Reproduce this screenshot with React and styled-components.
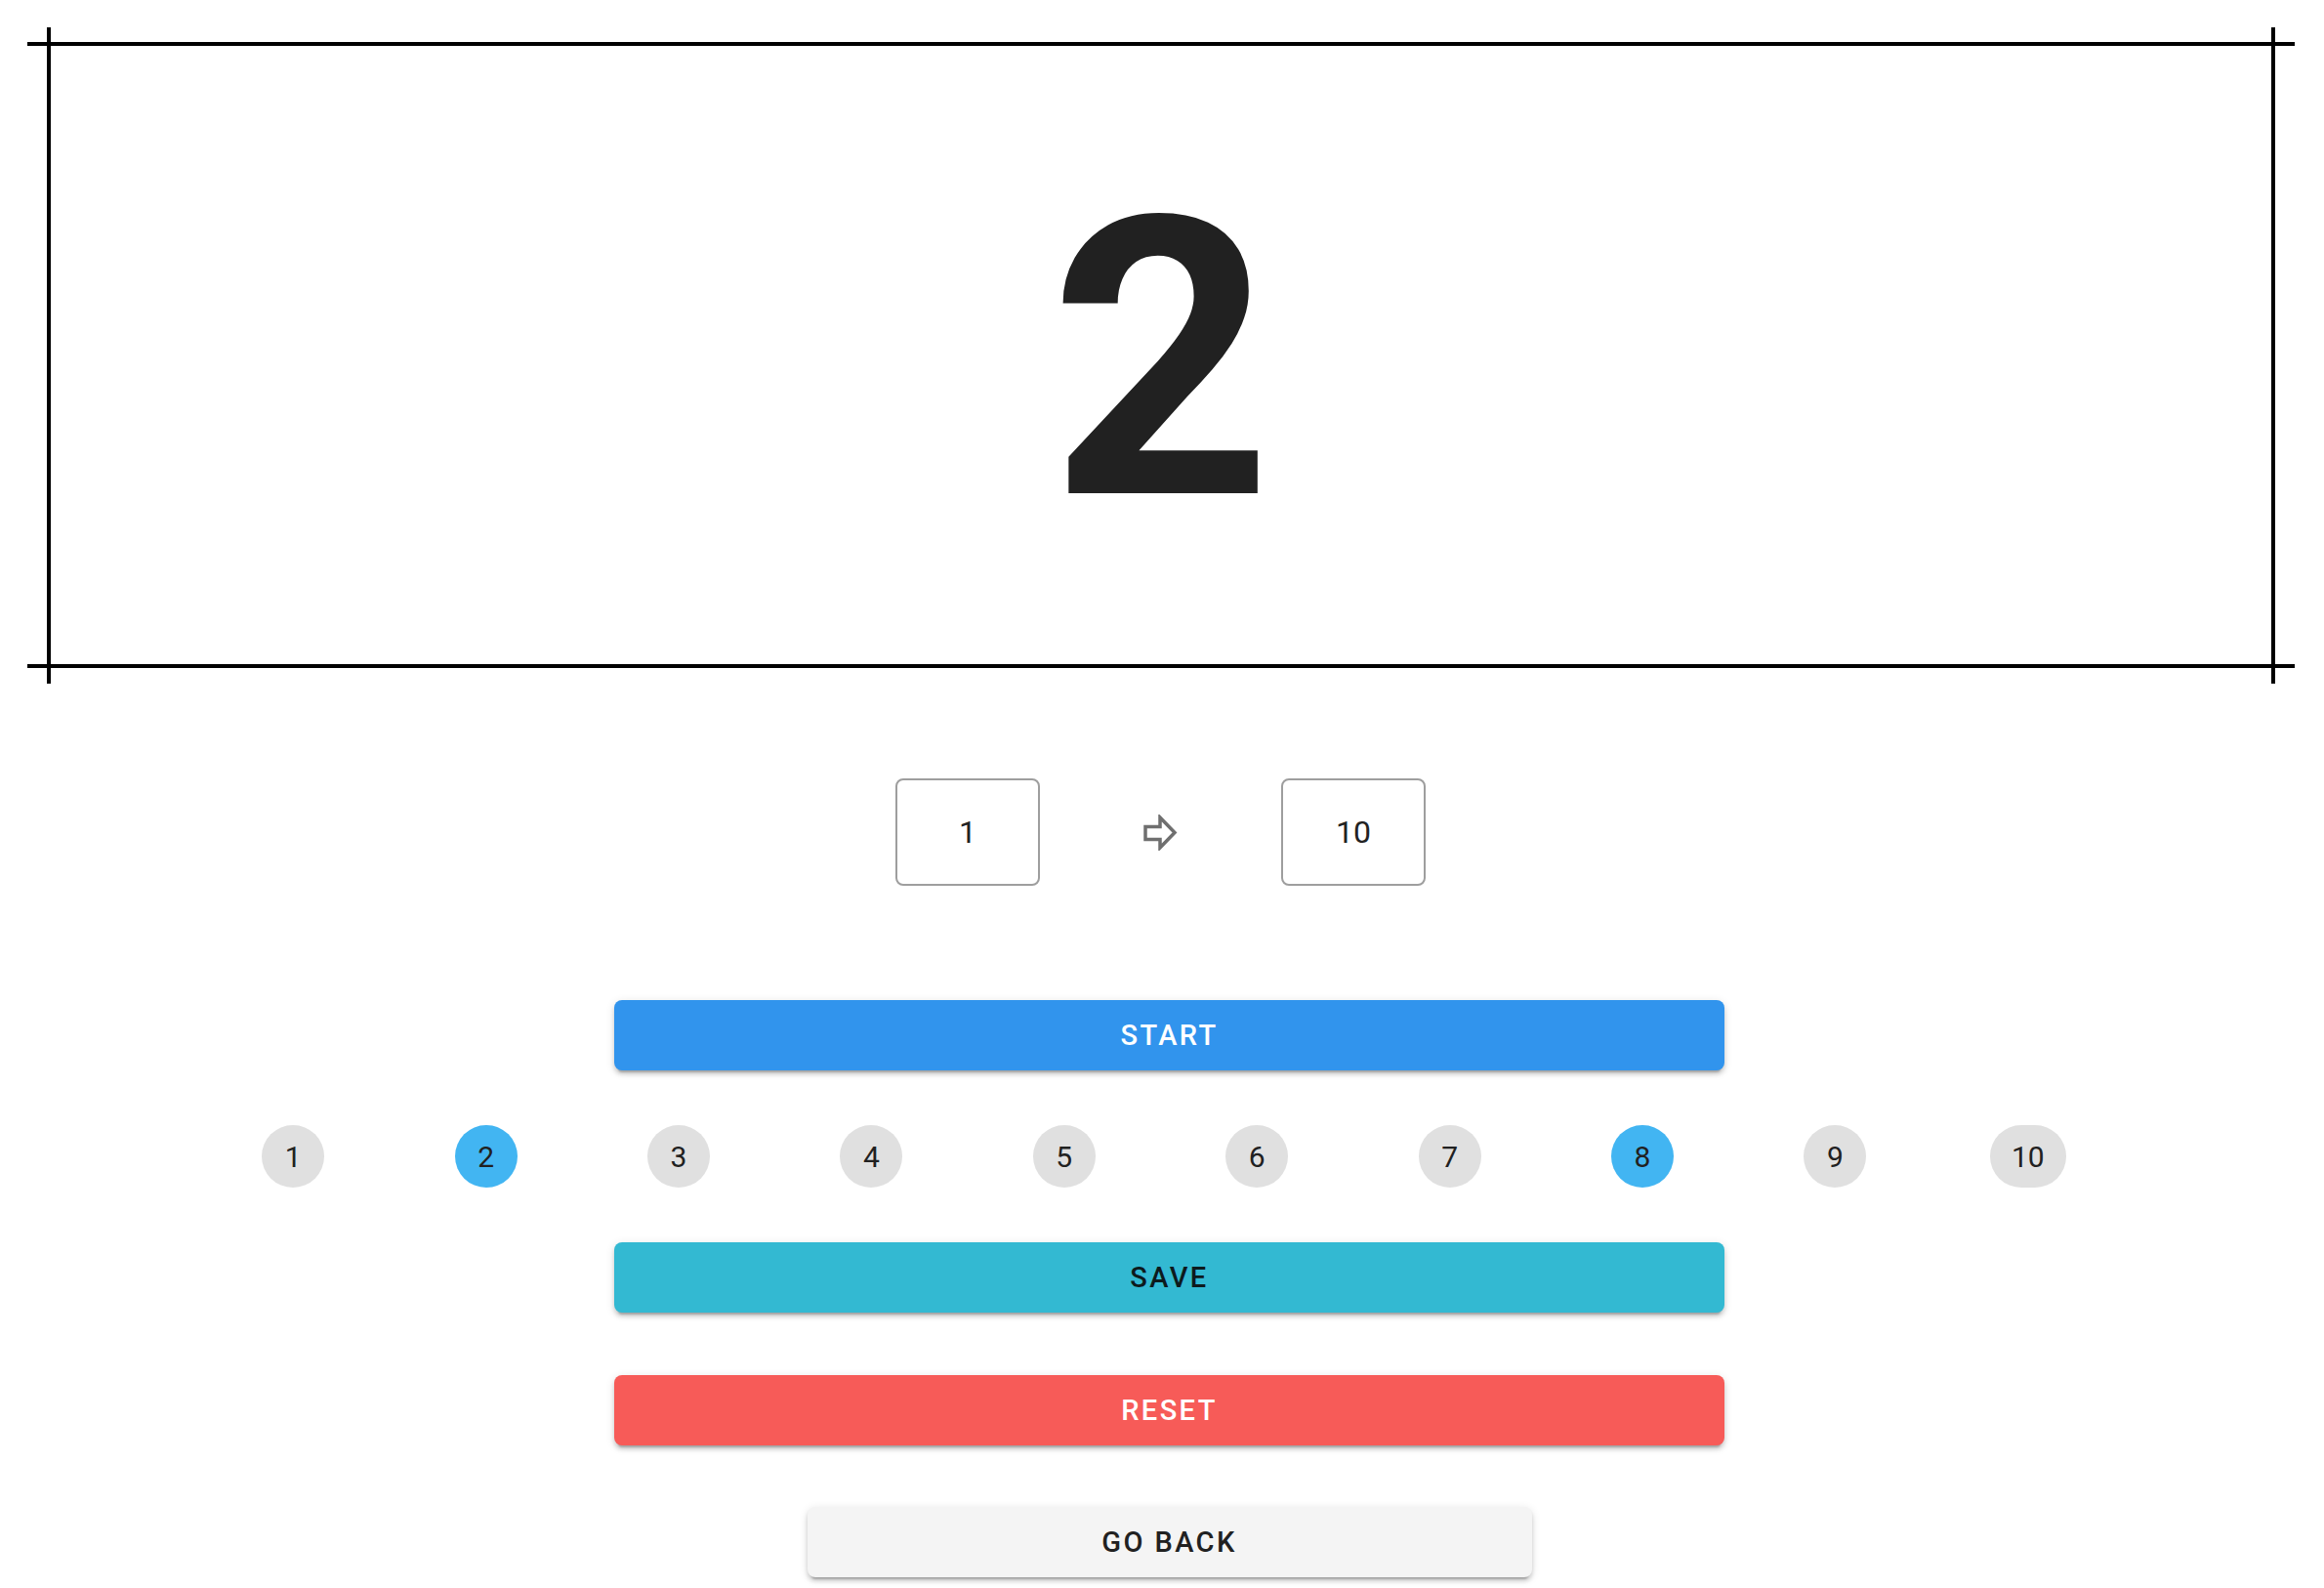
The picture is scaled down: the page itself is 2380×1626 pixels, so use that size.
import React from 'react';
import styled, { createGlobalStyle } from 'styled-components';

const GlobalStyle = createGlobalStyle`
  body {
    margin: 0;
    background: #ffffff;
    font-family: Roboto, "Liberation Sans", Arial, sans-serif;
    color: #212121;
  }
`;

const Page = styled.div`
  display: flex;
  flex-direction: column;
  padding-bottom: 10px;
`;

// crop-mark frame: vertical rails overshoot the horizontal rules and vice versa
const Frame = styled.div`
  margin: 28px 30px 0 28px;
  padding: 0 20px;
`;

const Rails = styled.div`
  border-left: 4px solid #000;
  border-right: 4px solid #000;
  padding: 15px 0 16px;
`;

const Panel = styled.div`
  box-sizing: border-box;
  margin: 0 -24px;
  height: 641px;
  padding-top: 10px;
  border-top: 4px solid #000;
  border-bottom: 4px solid #000;
  display: flex;
  align-items: center;
  justify-content: center;
`;

const Current = styled.div`
  font-size: 398px;
  font-weight: 700;
  line-height: 1;
  color: #212121;
`;

const RangeRow = styled.div`
  display: flex;
  align-items: center;
  justify-content: center;
  gap: 106px;
  margin-top: 97px;
  padding-right: 3px;
`;

const RangeBox = styled.div`
  box-sizing: border-box;
  width: 148px;
  height: 110px;
  border: 2px solid #9e9e9e;
  border-radius: 8px;
  display: flex;
  align-items: center;
  justify-content: center;
  font-size: 32px;
  color: #222;
`;

const Arrow = () => (
  <svg width="35" height="37" viewBox="0 0 35 37" role="presentation">
    <polygon
      points="2,12.5 17,12.5 17,3 32,18.5 17,34 17,25.5 2,25.5"
      fill="none"
      stroke="#6f6f6f"
      strokeWidth="3.5"
      strokeLinejoin="miter"
    />
  </svg>
);

const Actions = styled.div`
  display: flex;
  flex-direction: column;
  align-items: center;
  padding-left: 15px;
  margin-top: ${(props) => props.top}px;
`;

const Button = styled.button`
  box-sizing: border-box;
  width: ${(props) => (props.narrow ? 742 : 1137)}px;
  height: 72px;
  border: none;
  border-radius: 8px;
  background: ${(props) => props.bg};
  color: ${(props) => props.fg};
  font-family: Roboto, "Liberation Sans", Arial, sans-serif;
  font-size: 29px;
  font-weight: 500;
  letter-spacing: 2.4px;
  text-transform: uppercase;
  display: flex;
  align-items: center;
  justify-content: center;
  box-shadow: 0 6px 2px -4px rgba(0, 0, 0, 0.2), 0 4px 4px 0 rgba(0, 0, 0, 0.14),
    0 2px 10px 0 rgba(0, 0, 0, 0.12);
  margin-top: ${(props) => props.top || 0}px;
  cursor: pointer;
`;

const Steps = styled.div`
  display: grid;
  grid-template-columns: repeat(10, 197.4px);
  justify-content: center;
  margin-top: 56px;
  padding-right: 3px;
`;

const StepCell = styled.div`
  display: flex;
  justify-content: center;
`;

const Step = styled.div`
  box-sizing: border-box;
  min-width: 64px;
  height: 64px;
  padding: 0 22px;
  border-radius: 32px;
  background: ${(props) => (props.active ? '#42b5f2' : '#e0e0e0')};
  color: #212121;
  font-size: 30px;
  display: flex;
  align-items: center;
  justify-content: center;
`;

const marked = [2, 8];

const App = () => (
  <Page>
    <GlobalStyle />
    <Frame>
      <Rails>
        <Panel>
          <Current>2</Current>
        </Panel>
      </Rails>
    </Frame>

    <RangeRow>
      <RangeBox>1</RangeBox>
      <Arrow />
      <RangeBox>10</RangeBox>
    </RangeRow>

    <Actions top={117}>
      <Button bg="#3194ed" fg="#ffffff">Start</Button>
    </Actions>

    <Steps>
      {Array.from({ length: 10 }, (_, i) => i + 1).map((n) => (
        <StepCell key={n}>
          <Step active={marked.includes(n)}>{n}</Step>
        </StepCell>
      ))}
    </Steps>

    <Actions top={56}>
      <Button bg="#33b9d2" fg="#0d1a1d">Save</Button>
      <Button bg="#f75b58" fg="#ffffff" top={64}>Reset</Button>
      <Button bg="#f4f4f4" fg="#212121" narrow top={63}>Go back</Button>
    </Actions>
  </Page>
);

export default App;
